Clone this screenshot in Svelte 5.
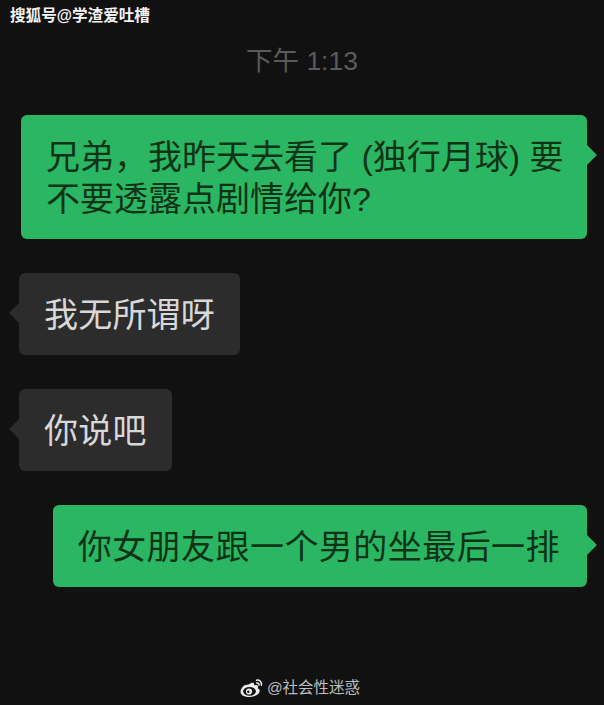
<script>
	const messages = [
		{ side: 'me', text: '兄弟，我昨天去看了 (独行月球) 要不要透露点剧情给你?' },
		{ side: 'other', text: '我无所谓呀' },
		{ side: 'other', text: '你说吧' },
		{ side: 'me', wide: true, text: '你女朋友跟一个男的坐最后一排' }
	];
</script>

<div class="page">
	<div class="source">搜狐号@学渣爱吐槽</div>
	<div class="time">下午 1:13</div>

	<div class="chat">
		{#each messages as msg}
			<div class="bubble {msg.side}" class:wide={msg.wide}>{msg.text}</div>
		{/each}
	</div>

	<div class="watermark">
		<svg width="24" height="20" viewBox="0 0 24 20" aria-hidden="true">
			<path d="M8.600 6.600c2.600-2.200 4.800-2.400 5.400-1.300.3.700.2 1.400-.1 2.200 1.600-.6 3.500-.6 4 .5.4.8.2 1.500-.3 2.200 1.300.4 2.200 1.300 2.200 2.600 0 2.900-4.300 6.200-10 6.200C4.600 19 .5 17 .5 13.700c0-2.100 1.500-4.600 3.900-6.500" fill="#ececec"/>
			<ellipse cx="9.500" cy="13.300" rx="6.400" ry="4.400" fill="#111112"/>
			<circle cx="9" cy="13.500" r="3.100" fill="#ececec"/>
			<circle cx="8.300" cy="13.800" r="1.200" fill="#111112"/>
			<path d="M16.500 2.200c3-.6 5.600 1.900 4.900 5M16.800 5c1.400-.3 2.500.9 2.200 2.200" fill="none" stroke="#ececec" stroke-width="1.500" stroke-linecap="round"/>
		</svg>
		<span>@社会性迷惑</span>
	</div>
</div>

<style>
	:global(body) {
		background: #111112;
	}

	.page {
		width: 604px;
		height: 705px;
		box-sizing: border-box;
		display: flex;
		flex-direction: column;
		background: #111112;
		font-family: "Liberation Sans", "Noto Sans CJK SC", sans-serif;
		overflow: hidden;
	}

	.source {
		margin: 7px 0 0 10px;
		font-size: 15.600px;
		line-height: 18px;
		font-weight: 700;
		color: #f4f4f4;
	}

	.time {
		margin-top: 21px;
		text-align: center;
		font-size: 26.500px;
		line-height: 30px;
		color: #5a5a5a;
	}

	.chat {
		margin-top: 39px;
		display: flex;
		flex-direction: column;
		gap: 34px;
	}

	.bubble {
		position: relative;
		box-sizing: border-box;
		padding: 21px 25px 19px;
		border-radius: 6px;
		font-size: 34px;
		line-height: 42px;
	}

	.bubble::after {
		content: '';
		position: absolute;
		top: 33px;
		width: 14px;
		height: 14px;
		transform: rotate(45deg);
		background: inherit;
	}

	.me {
		align-self: flex-end;
		margin-right: 17px;
		max-width: 566px;
		padding-right: 23px;
		background: #2bb663;
		color: #0e3317;
	}

	.me.wide {
		padding-right: 27px;
		letter-spacing: 0.45px;
	}

	.me::after {
		right: -7px;
	}

	.other {
		align-self: flex-start;
		margin-left: 19px;
		letter-spacing: 0.2px;
		background: #2c2c2c;
		color: #d8d8d8;
	}

	.other::after {
		left: -7px;
	}

	.watermark {
		margin-top: auto;
		margin-bottom: 7px;
		margin-right: 4px;
		align-self: center;
		display: flex;
		align-items: center;
		gap: 3px;
		font-size: 15.500px;
		line-height: 20px;
		color: #bdbdbd;
	}
</style>
